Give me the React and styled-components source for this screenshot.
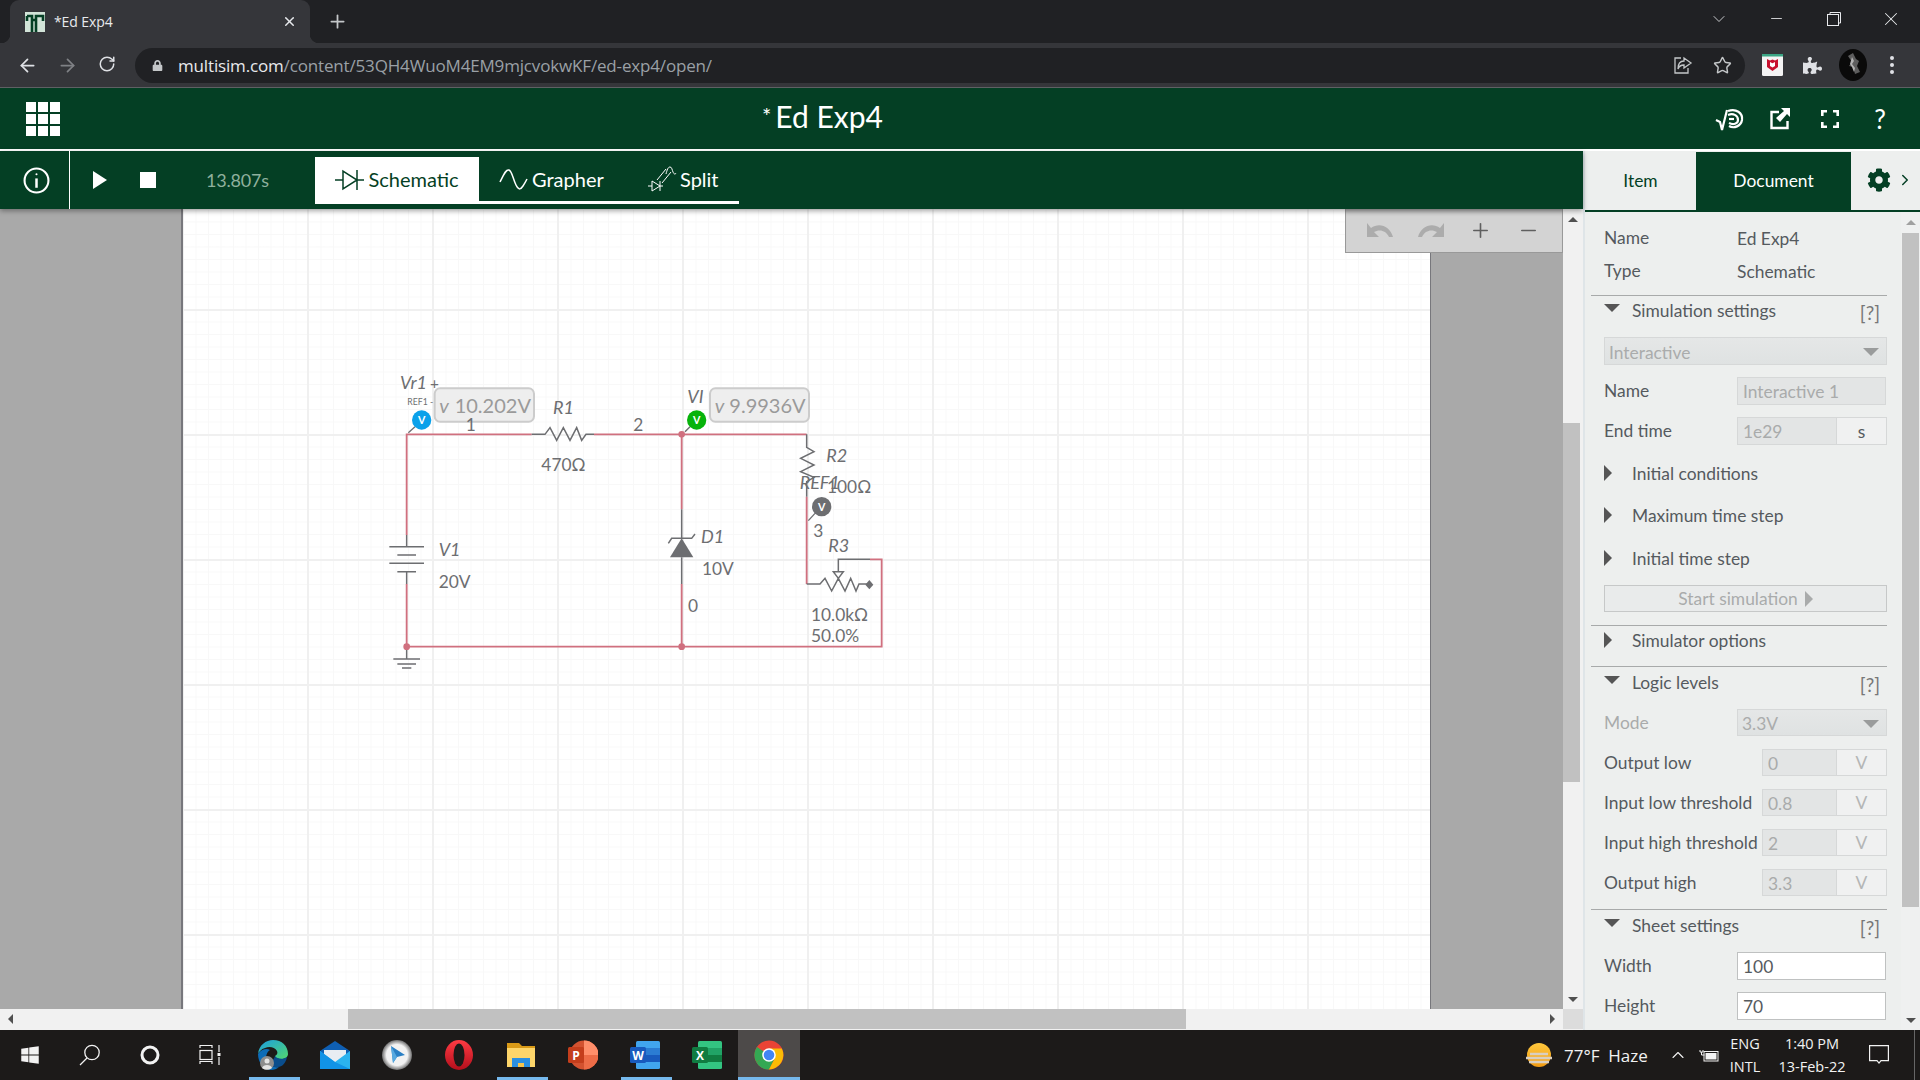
import React from "react";
import styled, {createGlobalStyle} from "styled-components";
import {ArrowLeft, ArrowRight, RotateCw, Plus, X, Minus, ChevronDown, ChevronUp, ChevronRight, Star} from "lucide-react";
import {FaCog, FaPuzzlePiece, FaWindows, FaLock} from "react-icons/fa";

const GREEN = "#043f24";
const WIRE = "#d0707f";
const PART = "#6d6e71";

const GlobalStyle = createGlobalStyle`
  html, body { margin: 0; padding: 0; background: #202124; overflow: hidden; }
  * { box-sizing: border-box; }
`;

const Page = styled.div`
  width: 1920px;
  height: 1080px;
  display: flex;
  flex-direction: column;
  font-family: "Lato", sans-serif;
  overflow: hidden;
`;

/* browser chrome */
const TabStrip = styled.div`
  height: 43px;
  flex: none;
  background: #202124;
  display: flex;
  align-items: flex-end;
  padding-left: 10px;
  color: #e8eaed;
  font-family: "Open Sans", sans-serif;
`;

const BrowserTab = styled.div`
  position: relative;
  width: 300px;
  height: 43px;
  background: #35363a;
  border-radius: 9px 9px 0 0;
  display: flex;
  align-items: center;
  padding: 0 13px 0 15px;
  font-size: 14px;
  letter-spacing: -0.1px;
  &::before, &::after {
    content: "";
    position: absolute;
    bottom: 0;
    width: 9px;
    height: 9px;
  }
  &::before { left: -9px; background: radial-gradient(circle at 0 0, transparent 9px, #35363a 9.5px); }
  &::after { right: -9px; background: radial-gradient(circle at 100% 0, transparent 9px, #35363a 9.5px); }
`;

const TabTitle = styled.span`
  margin-left: 9px;
  flex: 1;
`;

const NewTab = styled.div`
  margin-left: 17px;
  align-self: center;
  display: flex;
`;

const WindowButtons = styled.div`
  margin-left: auto;
  display: flex;
  align-items: center;
  height: 100%;
  padding-bottom: 6px;
`;

const WindowButton = styled.div`
  width: 57.5px;
  display: flex;
  justify-content: center;
`;

const BrowserBar = styled.div`
  height: 45px;
  flex: none;
  background: #35363a;
  border-bottom: 1px solid #5f6064;
  display: flex;
  align-items: center;
  color: #dfe1e5;
`;

const NavButton = styled.div`
  width: 40px;
  display: flex;
  justify-content: center;
  color: ${p => (p.$dim ? "#7f8185" : "#dfe1e5")};
`;

const NavGroup = styled.div`
  display: flex;
  width: 135px;
  padding-left: 7px;
`;

const Omnibox = styled.div`
  flex: 1;
  height: 35px;
  border-radius: 18px;
  background: #202124;
  display: flex;
  align-items: center;
  padding-left: 17px;
  font-family: "Open Sans", sans-serif;
  font-size: 17px;
  letter-spacing: -0.16px;
`;

const Host = styled.span`
  margin-left: 15px;
  color: #e8eaed;
`;

const UrlPath = styled.span`
  color: #9aa0a6;
`;

const OmniIcons = styled.div`
  margin-left: auto;
  display: flex;
  gap: 20px;
  align-items: center;
  padding-right: 13px;
`;

const BarTools = styled.div`
  width: 175px;
  flex: none;
  display: flex;
  align-items: center;
  padding-left: 17px;
`;

const ToolSlot = styled.div`
  width: ${p => p.$w}px;
  flex: none;
  display: flex;
  justify-content: center;
  align-items: center;
  & > svg { flex: none; }
`;

/* multisim header */
const AppHeader = styled.div`
  height: 63px;
  flex: none;
  background: ${GREEN};
  border-bottom: 2px solid #fff;
  display: flex;
  align-items: center;
  position: relative;
  padding-left: 26px;
  color: #fff;
`;

const Waffle = styled.div`
  display: grid;
  grid-template-columns: repeat(3, 10px);
  grid-auto-rows: 10px;
  gap: 2px;
`;

const WaffleCell = styled.div`
  background: #fff;
`;

const DocTitle = styled.div`
  position: absolute;
  left: 762px;
  top: 10px;
  font-size: 30px;
  line-height: 36px;
`;

const TitleMark = styled.span`
  font-size: 22px;
  margin-right: 4px;
  vertical-align: 4px;
`;

const HeaderIcons = styled.div`
  margin-left: auto;
  display: flex;
  align-items: center;
  padding-right: 15px;
`;

const HeaderIcon = styled.div`
  width: 50px;
  display: flex;
  justify-content: center;
  font-size: 26px;
  line-height: 30px;
`;

/* work area */
const Workspace = styled.div`
  flex: 1;
  display: flex;
  min-height: 0;
`;

const MainColumn = styled.div`
  width: 1583px;
  flex: none;
  display: flex;
  flex-direction: column;
`;

const AppToolbar = styled.div`
  height: 58px;
  flex: none;
  background: ${GREEN};
  display: flex;
  align-items: center;
  color: #fff;
  position: relative;
  z-index: 2;
  box-shadow: 0 2px 5px rgba(0, 0, 0, 0.35);
`;

const InfoCell = styled.div`
  width: 70px;
  height: 100%;
  border-right: 1px solid #fff;
  display: flex;
  align-items: center;
  justify-content: center;
  padding-left: 3px;
`;

const PlayIcon = styled.div`
  margin-left: 23px;
  width: 0;
  height: 0;
  border-left: 14px solid #fff;
  border-top: 9px solid transparent;
  border-bottom: 9px solid transparent;
`;

const StopIcon = styled.div`
  margin-left: 33px;
  width: 16px;
  height: 16px;
  background: #fff;
`;

const SimTime = styled.div`
  margin-left: 50px;
  width: 109px;
  color: #8fb09d;
  font-size: 18px;
  letter-spacing: -0.2px;
`;

const ViewTabs = styled.div`
  display: flex;
  height: 47px;
  width: 424px;
  border-bottom: 3px solid #fff;
`;

const ViewTab = styled.div`
  display: flex;
  align-items: center;
  justify-content: ${p => (p.$active ? "center" : "flex-start")};
  width: ${p => p.$w}px;
  height: ${p => (p.$active ? "47px" : "44px")};
  padding-left: ${p => p.$pad || 0}px;
  padding-bottom: ${p => (p.$active ? 2 : 0)}px;
  background: ${p => (p.$active ? "#fff" : "transparent")};
  color: ${p => (p.$active ? GREEN : "#fff")};
  font-size: 20px;
`;

const Canvas = styled.div`
  flex: 1;
  display: flex;
  min-height: 0;
`;

const ViewPort = styled.div`
  position: relative;
  flex: 1;
  background: #a9a9a9;
  display: flex;
  padding-left: 181px;
  overflow: hidden;
`;

const Sheet = styled.div`
  position: relative;
  width: 1250px;
  height: 100%;
  border-left: 2px solid #77777c;
  border-right: 1px solid #77777c;
  background-color: #fff;
  background-image:
    linear-gradient(to right, #f0f0f0 2px, transparent 2px),
    linear-gradient(to bottom, #f0f0f0 2px, transparent 2px),
    linear-gradient(to right, #f8f8f8 1px, transparent 1px),
    linear-gradient(to bottom, #f8f8f8 1px, transparent 1px);
  background-size: 125px 125px, 125px 125px, 12.5px 12.5px, 12.5px 12.5px;
  background-position: 124px 0, 0 100px, 0 0, 0 0;
`;

const Circuit = styled.svg`
  position: absolute;
  left: 197px;
  top: 151px;
  width: 520px;
  height: 320px;
`;

const Note = styled.text`
  font-family: "Lato", sans-serif;
  font-size: ${p => p.$size || (p.$italic ? 54 : 52)}px;
  font-style: ${p => (p.$italic ? "italic" : "normal")};
  fill: ${p => p.$fill || PART};
  font-weight: ${p => p.$weight || 400};
`;

const ProbeBox = styled.rect`
  fill: #eeeeee;
  stroke: #cccccc;
  stroke-width: 6;
`;

const ZoomTools = styled.div`
  position: absolute;
  left: 1345px;
  top: 0;
  width: 218px;
  height: 44px;
  background: #d3d3d3;
  border: 1px solid #999;
  border-top: 0;
  display: flex;
  align-items: center;
  justify-content: space-around;
  padding: 0 10px 0 8px;
  box-shadow: inset 0 6px 5px -4px rgba(0, 0, 0, 0.25);
`;

const VScroll = styled.div`
  width: 20px;
  flex: none;
  background: #f1f1f1;
  display: flex;
  flex-direction: column;
  align-items: center;
`;

const ThumbSpace = styled.div`
  flex: 1;
  width: 100%;
  padding-top: ${p => p.$before}px;
  display: flex;
  flex-direction: column;
`;

const VThumb = styled.div`
  height: ${p => p.$h}px;
  width: 17px;
  margin-left: ${p => p.$x || 0}px;
  background: #c1c1c1;
`;

const Caret = styled.div`
  width: 0;
  height: 0;
  flex: none;
  ${p => p.$dir === "up" && `border-left: ${p.$s}px solid transparent; border-right: ${p.$s}px solid transparent; border-bottom: ${p.$s}px solid ${p.$c};`}
  ${p => p.$dir === "down" && `border-left: ${p.$s}px solid transparent; border-right: ${p.$s}px solid transparent; border-top: ${p.$s}px solid ${p.$c};`}
  ${p => p.$dir === "right" && `border-top: ${p.$s}px solid transparent; border-bottom: ${p.$s}px solid transparent; border-left: ${p.$s}px solid ${p.$c};`}
  ${p => p.$dir === "left" && `border-top: ${p.$s}px solid transparent; border-bottom: ${p.$s}px solid transparent; border-right: ${p.$s}px solid ${p.$c};`}
`;

const ScrollEnd = styled.div`
  height: 20px;
  flex: none;
  display: flex;
  align-items: center;
  justify-content: center;
`;

const HScroll = styled.div`
  height: 21px;
  flex: none;
  background: #f1f1f1;
  border-bottom: 1px solid #f1f1f1;
  display: flex;
  align-items: center;
`;

const HTrack = styled.div`
  flex: 1;
  height: 100%;
  padding-left: 328px;
`;

const HThumb = styled.div`
  width: 838px;
  height: 20px;
  background: #c1c1c1;
`;

const ScrollCap = styled.div`
  width: 20px;
  flex: none;
  display: flex;
  justify-content: center;
`;

const Corner = styled.div`
  width: 20px;
  height: 100%;
  flex: none;
  background: #dcdcdc;
  margin-left: 1px;
`;

/* right panel */
const Panel = styled.div`
  flex: 1;
  display: flex;
  flex-direction: column;
  background: #edefee;
  border-left: 2px solid #dfe5e8;
  color: #555a5e;
  font-size: 17.4px;
`;

const PanelTabs = styled.div`
  height: 61px;
  flex: none;
  display: flex;
  padding-top: 1px;
  background: #edefee;
  border-bottom: 2px solid ${GREEN};
`;

const PanelTab = styled.div`
  width: ${p => p.$w}px;
  display: flex;
  align-items: center;
  justify-content: center;
  gap: 5px;
  padding-left: ${p => p.$pad || 0}px;
  padding-bottom: 2px;
  color: ${p => (p.$active ? "#fff" : GREEN)};
  background: ${p => (p.$active ? GREEN : "transparent")};
`;

const PanelBody = styled.div`
  flex: 1;
  display: flex;
  min-height: 0;
`;

const PanelContent = styled.div`
  width: 316px;
  flex: none;
  padding: 13px 14px 0 19px;
  overflow: hidden;
`;

const PanelScroll = styled(VScroll)`
  background: #eff0f0;
`;

const PropRow = styled.div`
  display: flex;
  align-items: center;
  height: ${p => p.$h || 28}px;
  margin-top: ${p => p.$mt || 0}px;
`;

const PropName = styled.div`
  width: ${p => p.$w || 133}px;
  flex: none;
  white-space: nowrap;
  padding-bottom: 1px;
  color: ${p => (p.$dim ? "#a9abab" : "inherit")};
`;

const Divider = styled.div`
  height: 1px;
  background: #a8aaaa;
  margin: ${p => p.$mt || 0}px 0 0 -13px;
`;

const SectionHead = styled.div`
  display: flex;
  align-items: center;
  flex: 1;
  height: 30px;
  padding-bottom: ${p => (p.$lift ? 2 : 0)}px;
`;

const CaretSlot = styled.div`
  width: 28px;
  flex: none;
  display: flex;
  align-items: center;
  padding-bottom: ${p => (p.$open ? 5 : 0)}px;
`;

const Help = styled.div`
  margin-left: auto;
  margin-right: 7px;
  margin-top: 5px;
  font-size: 19px;
  color: #777;
`;

const Select = styled.div`
  flex: 1;
  display: flex;
  align-items: center;
  padding: 2px 7px 0 4px;
  background: linear-gradient(#e5e7e7, #dfe2e2);
  border: 1px solid #d6d8d8;
  color: #aaacac;
  justify-content: space-between;
  margin-top: ${p => p.$mt || 0}px;
  height: ${p => p.$h || 28}px;
`;

const Field = styled.div`
  display: flex;
  align-items: center;
  height: 100%;
  width: ${p => p.$w}px;
  padding: 1px 0 0 5px;
  border: 1px solid ${p => (p.$on ? "#bfc1c1" : "#d6d8d8")};
  background: ${p => (p.$on ? "#fff" : "#e3e5e5")};
  color: ${p => (p.$on ? "#555a5e" : "#a9abab")};
`;

const Unit = styled.div`
  width: 50px;
  height: 100%;
  display: flex;
  align-items: center;
  justify-content: center;
  border: 1px solid #d6d8d8;
  border-left: 0;
  background: #f0f1f1;
  color: ${p => (p.$dim ? "#b4b6b6" : "#555a5e")};
`;

const StartButton = styled.div`
  margin-top: 12px;
  height: 27px;
  display: flex;
  align-items: center;
  justify-content: center;
  gap: 7px;
  border: 1px solid #c6c8c8;
  background: #e9ebeb;
  color: #a9abab;
`;

/* windows taskbar */
const Taskbar = styled.div`
  height: 50px;
  flex: none;
  background: #1c1a19;
  display: flex;
  align-items: center;
  color: #f2f2f2;
  font-family: "Open Sans", sans-serif;
`;

const SysSlot = styled.div`
  width: 60px;
  flex: none;
  display: flex;
  justify-content: center;
`;

const AppSlots = styled.div`
  display: flex;
  margin-left: 2px;
  height: 100%;
`;

const AppSlot = styled.div`
  width: 62px;
  height: 100%;
  position: relative;
  display: flex;
  align-items: center;
  justify-content: center;
  background: ${p => (p.$active ? "#4d4a49" : "transparent")};
  ${p => p.$open && `&::after {
    content: "";
    position: absolute;
    bottom: 0;
    left: ${p.$active ? 0 : 7}px;
    right: ${p.$active ? 0 : 4}px;
    height: 3px;
    background: #76b9ed;
  }`}
`;

const Tray = styled.div`
  margin-left: auto;
  display: flex;
  align-items: center;
  height: 100%;
  padding-right: 5px;
  font-size: 14.5px;
`;

const Weather = styled.div`
  font-size: 17px;
  margin-left: 10px;
  width: 94px;
  white-space: pre;
`;

const TrayStack = styled.div`
  display: flex;
  flex-direction: column;
  align-items: center;
  gap: 3px;
  line-height: 20px;
  width: ${p => p.$w}px;
  margin-left: ${p => p.$ml || 0}px;
`;

const TrayIcon = styled.div`
  display: flex;
  margin-left: ${p => p.$ml || 0}px;
`;

const DeskEdge = styled.div`
  width: 1px;
  height: 100%;
  background: #666;
  margin-left: 25px;
`;

/* drawings */
const Favicon = () => (
  <svg width="20" height="20" viewBox="0 0 20 20">
    <rect width="20" height="20" fill="#d2e4d8" />
    <path d="M2 4h5v16M2 4v5M7 8h4v12M11 14V4h7v5" stroke="#043f24" strokeWidth="2.6" fill="none" />
  </svg>
);

const ShareIcon = () => (
  <svg width="20" height="20" viewBox="0 0 20 20" fill="none" stroke="#c4c7c9" strokeWidth="1.3">
    <path d="M8 3H2v15h13v-5" />
    <path d="M11 3l7 5-7 5v-3c-3 0-5 1-6 4 0-5 2-8 6-8z" />
  </svg>
);

const McAfee = () => (
  <svg width="21" height="22" viewBox="0 0 21 22">
    <rect width="21" height="22" rx="1.5" fill="#f4f4f4" />
    <rect width="21" height="2.5" fill="#3ba584" />
    <path d="M5 5l3 1.6 2.5-1 2.5 1L16 5v8l-5.5 4L5 13z" fill="#c8102e" />
    <path d="M8 8v4l2.5 1.6L13 12V8l-2.5 1.2z" fill="#fff" />
  </svg>
);

const Avatar = () => (
  <svg width="28" height="32" viewBox="0 0 28 32">
    <ellipse cx="14" cy="16" rx="14" ry="16" fill="#0a0a0a" />
    <path d="M9 7l5-3 3 6 3 2-2 5 3 6-5 2-2-7-4-1 3-4z" fill="#5d5d5d" />
    <path d="M13 8l2 4-2 3 3 4-1 4-2-5-2-3z" fill="#b2b2b2" />
  </svg>
);

const RootSpiral = () => (
  <svg width="30" height="26" viewBox="0 0 30 26" fill="none" stroke="#fff" strokeWidth="2.2">
    <path d="M1 14l4 2 2 8 5-20" />
    <path d="M13 5c8-3 15 2 14 9-1 6-8 9-13 6" />
    <path d="M13 9c5-2 10 0 10 5 0 4-5 5-9 3" />
    <path d="M14 13h5" />
  </svg>
);

const PopOut = () => (
  <svg width="20" height="22" viewBox="0 0 20 22" fill="none">
    <path d="M9 4H1.5v16h16v-7" stroke="#fff" strokeWidth="2.4" />
    <path d="M20 0v9l-3-3-7 8-4-4 8-7-3-3z" fill="#fff" />
  </svg>
);

const FullScreen = () => (
  <svg width="18" height="18" viewBox="0 0 18 18" fill="none" stroke="#fff" strokeWidth="2.6">
    <path d="M1.3 6V1.3H6M12 1.3h4.7V6M16.7 12v4.7H12M6 16.7H1.3V12" />
  </svg>
);

const InfoRing = () => (
  <svg width="27" height="27" viewBox="0 0 26 26" fill="none" stroke="#fff" strokeWidth="2">
    <circle cx="13" cy="13" r="11.5" />
    <path d="M13 11v9" strokeWidth="2.4" />
    <circle cx="13" cy="7" r="1" fill="#fff" stroke="none" />
  </svg>
);

const DiodeTab = () => (
  <svg width="30" height="24" viewBox="0 0 30 24" fill="none" stroke={GREEN} strokeWidth="1.5" style={{marginRight: 3, marginTop: 2}}>
    <path d="M0 12h8M22 12h7M8 3v18l14-9zM22 2v20" />
  </svg>
);

const WaveTab = () => (
  <svg width="30" height="24" viewBox="0 0 30 24" fill="none" stroke="#fff" strokeWidth="1.5" style={{marginRight: 3}}>
    <path d="M1 15C5 7 7 2 10 3c3 1 4 9 7 15s5 4 7 1 3-5 4-7" />
  </svg>
);

const SplitTab = () => (
  <svg width="30" height="28" viewBox="0 0 30 28" fill="none" stroke="#fff" strokeWidth="1" style={{marginRight: 3}}>
    <path d="M1 21h4M13 21h3M5 16v10l8-5zM13 16v10" />
    <path d="M10 15l9-11M15 18l9-11" />
    <path d="M19 9c1-4 2-7 4-7s2 3 3 5 2 3 3 1" />
  </svg>
);

const UndoIcon = ({flip}) => (
  <svg width="26" height="15" viewBox="0 0 26 15" fill="#acacac" style={flip ? {transform: "scaleX(-1)"} : undefined}>
    <path d="M0 0v14h12l-5-5c5-3 12-2 15 5h4C23 3 12-1 4 5z" />
  </svg>
);

const SearchIcon = () => (
  <svg width="22" height="22" viewBox="0 0 22 22" fill="none" stroke="#f2f2f2" strokeWidth="1.3">
    <circle cx="13" cy="8.5" r="7.2" />
    <path d="M8 14L1 21" />
  </svg>
);

const CortanaRing = () => (
  <svg width="20" height="20" viewBox="0 0 20 20" fill="none" stroke="#f2f2f2" strokeWidth="3">
    <circle cx="10" cy="10" r="8" />
  </svg>
);

const TaskView = () => (
  <svg width="22" height="20" viewBox="0 0 22 20" fill="none" stroke="#f2f2f2" strokeWidth="1.2">
    <path d="M1 3V0.5h12V3M1 19v-2.5h12V19" />
    <rect x="1" y="5.5" width="12" height="9" />
    <path d="M20 0v7M20 12v8" />
    <rect x="18.5" y="8" width="3" height="3" fill="#f2f2f2" stroke="none" />
  </svg>
);

const EdgeIcon = () => (
  <svg width="32" height="32" viewBox="0 0 32 32">
    <defs>
      <linearGradient id="edgeA" x1="0" y1="0" x2="1" y2="1">
        <stop offset="0" stopColor="#1b9de2" />
        <stop offset="1" stopColor="#52d86f" />
      </linearGradient>
    </defs>
    <path d="M1 15C2 6 9 1 16 1c9 0 15 6 15 14 0 3-3 5-7 5-3 0-6-1-6-3 2-1 3-3 2-5-2-4-8-5-12-3-4 1-6 4-7 6z" fill="url(#edgeA)" />
    <path d="M1 15c3-5 9-6 12-4-3 2-5 6-3 11 1 4 6 7 12 6-2 2-5 3-8 3C7 31 1 24 1 15z" fill="#0c6cb8" />
    <path d="M18 17c2 3 8 4 12 1-1 6-5 10-9 10-5 1-9-2-11-6 2 1 6 1 8-5z" fill="#0a4d8c" />
    <circle cx="10" cy="24" r="7" fill="#8d8d8d" />
    <circle cx="10" cy="22" r="2.5" fill="#e4e4e4" />
    <path d="M5 29c1-4 9-4 10 0-3 2-7 2-10 0z" fill="#e4e4e4" />
  </svg>
);

const MailIcon = () => (
  <svg width="30" height="28" viewBox="0 0 30 28">
    <path d="M0 10L15 0l15 10v18H0z" fill="#0f5fb3" />
    <path d="M4 9h22v8l-11 6-11-6z" fill="#e8edf2" />
    <path d="M0 10l15 11 15-11v18H0z" fill="#2bb3ef" />
    <path d="M0 28V10l15 11 15 7z" fill="#1193e6" />
  </svg>
);

const BingIcon = () => (
  <svg width="30" height="30" viewBox="0 0 30 30">
    <defs>
      <radialGradient id="bingA">
        <stop offset="0.7" stopColor="#f2f2f2" />
        <stop offset="1" stopColor="#6f6f6f" />
      </radialGradient>
    </defs>
    <circle cx="15" cy="15" r="15" fill="url(#bingA)" />
    <path d="M9 6l14 9-8 2-4 6z" fill="#2a7fc4" />
    <path d="M9 6l6 11-4 6z" fill="#57a9e0" />
  </svg>
);

const OperaIcon = () => (
  <svg width="30" height="30" viewBox="0 0 30 30">
    <defs>
      <linearGradient id="opA" x1="0" y1="0" x2="0" y2="1">
        <stop offset="0" stopColor="#ff3b43" />
        <stop offset="1" stopColor="#b30f1c" />
      </linearGradient>
    </defs>
    <ellipse cx="15" cy="15" rx="14" ry="15" fill="url(#opA)" />
    <ellipse cx="15" cy="15" rx="5.5" ry="11.5" fill="#1c1a19" />
  </svg>
);

const FolderIcon = () => (
  <svg width="28" height="28" viewBox="0 0 28 28">
    <path d="M0 2h12l3 3h13v21H0z" fill="#d99a17" />
    <path d="M0 7h28v19H0z" fill="#fdd56a" />
    <path d="M5 26v-9h18v9h-6v-4h-6v4z" fill="#2a8fe0" />
    <rect x="11" y="22" width="6" height="4" fill="#f4c44e" />
  </svg>
);

const OfficeIcon = ({letter, tile, back, kind}) => (
  <svg width="30" height="30" viewBox="0 0 30 30">
    {kind === "ppt" ? (
      <>
        <circle cx="16" cy="15" r="14.5" fill={back[0]} />
        <path d="M16 .5A14.5 14.5 0 0 1 30.5 15H16z" fill={back[1]} />
        <path d="M16 15h14.5A14.5 14.5 0 0 1 16 29.5z" fill={back[2]} />
      </>
    ) : (
      <>
        <rect x="6" y="1" width="24" height="28" rx="1.5" fill={back[0]} />
        <rect x="6" y="8" width="24" height="7" fill={back[1]} />
        <rect x="6" y="15" width="24" height="7" fill={back[2]} />
      </>
    )}
    <rect x="0" y="7" width="16" height="16" rx="1.5" fill={tile} />
    <text x="8" y="19.5" textAnchor="middle" fill="#fff" fontSize="12" fontWeight="700" fontFamily="Open Sans, sans-serif">{letter}</text>
  </svg>
);

const ChromeIcon = () => (
  <svg width="30" height="30" viewBox="0 0 30 30">
    <circle cx="15" cy="15" r="14.5" fill="#ea4335" />
    <path d="M15 15L2.4 22.2A14.5 14.5 0 0 1 3 7z" fill="#34a853" />
    <path d="M15 15l7 1-7 13.5A14.5 14.5 0 0 1 2.4 22.2z" fill="#34a853" />
    <path d="M15 8.5h12.8A14.5 14.5 0 0 1 15 29.5L21 18z" fill="#fbbc05" />
    <circle cx="15" cy="15" r="6.8" fill="#fff" />
    <circle cx="15" cy="15" r="5.3" fill="#4285f4" />
  </svg>
);

const WeatherIcon = () => (
  <svg width="30" height="26" viewBox="0 0 30 26">
    <defs>
      <linearGradient id="sunA" x1="0" y1="0" x2="0" y2="1">
        <stop offset="0" stopColor="#ffc83d" />
        <stop offset="1" stopColor="#f09a12" />
      </linearGradient>
    </defs>
    <circle cx="15" cy="13" r="12" fill="url(#sunA)" />
    <path d="M2 16h26M6 12h18M5 20h20" stroke="#d9cfc0" strokeWidth="2.4" />
  </svg>
);

const BatteryIcon = () => (
  <svg width="20" height="13" viewBox="0 0 20 13" fill="none" stroke="#f2f2f2">
    <rect x="5" y="2.5" width="14" height="9.5" />
    <rect x="6.5" y="4" width="11" height="6.5" fill="#f2f2f2" stroke="none" />
    <path d="M1 1v2h3V1M2.5 3v3h3" strokeWidth="1" />
  </svg>
);

const NoticeIcon = () => (
  <svg width="20" height="20" viewBox="0 0 20 20" fill="none" stroke="#f2f2f2" strokeWidth="1.2">
    <path d="M.6.6h18.8v15H12l-2 2.5-2-2.5H.6z" />
  </svg>
);

const Wire = ({d}) => <path d={d} stroke={WIRE} strokeWidth="5.5" fill="none" />;
const Part = ({d}) => <path d={d} stroke={PART} strokeWidth="4.5" fill="none" />;

const Probe = ({x, y, fill, tail}) => (
  <g>
    <path d={tail} stroke={PART} strokeWidth="4" fill="none" />
    <circle cx={x} cy={y} r="29" fill={fill} />
    <Note x={x} y={y + 12} textAnchor="middle" $size={32} $weight={700} $fill="#fff">V</Note>
  </g>
);

const Schematic = () => (
  <Circuit viewBox="0 0 1560 960">
    <Wire d="M80 672V860H1505V598H1470M80 525V223H455M642 223H1280M905 223V448M905 672V860M1280 410V672" />
    <Part d="M80 525V560M28 560H132M52 585H108M28 610H132M52 635H108M80 635V672" />
    <Part d="M80 860V897M40 897H120M52 912H108M66 924H94" />
    <Part d="M455 223H495L510 203L530 241L550 203L570 241L590 203L605 241L618 223H642" />
    <Part d="M1280 223V262L1302 275L1262 295L1302 315L1262 335L1302 352L1280 365V410" />
    <Part d="M1280 672H1320L1335 655L1355 693L1375 655L1395 693L1412 655L1428 693L1437 672H1465" />
    <Part d="M1375 635V598H1470M1360 635H1390L1375 655Z" />
    <path d="M1468 660L1480 674L1468 688L1456 674Z" fill={PART} />
    <Part d="M905 448V535M905 592V672M865 550L875 535H935L945 522" />
    <path d="M905 535L940 592H870Z" fill={PART} />
    <circle cx="905" cy="223" r="10" fill={WIRE} />
    <circle cx="80" cy="860" r="10" fill={WIRE} />
    <circle cx="905" cy="860" r="10" fill={WIRE} />
    <Probe x={125} y={180} fill="#0ba1ea" tail="M105 200L85 218" />
    <Probe x={950} y={180} fill="#07b30b" tail="M930 200L915 215" />
    <Probe x={1325} y={440} fill={PART} tail="M1305 460L1285 482" />
    <ProbeBox x="164" y="85" width="298" height="100" rx="16" />
    <ProbeBox x="990" y="85" width="297" height="100" rx="16" />
    <Note x="178" y="158" $fill="#9a9a9a" $size={60} $italic>v</Note>
    <Note x="224" y="158" $fill="#9a9a9a" $size={60}>10.202V</Note>
    <Note x="1004" y="158" $fill="#9a9a9a" $size={60} $italic>v</Note>
    <Note x="1048" y="158" $fill="#9a9a9a" $size={60}>9.9936V</Note>
    <Note x="60" y="86" $italic>Vr1</Note>
    <Note x="150" y="86" $size={46}>+</Note>
    <Note x="82" y="134" $size={26}>REF1 -</Note>
    <Note x="257" y="212">1</Note>
    <Note x="760" y="212">2</Note>
    <Note x="519" y="162" $italic>R1</Note>
    <Note x="484" y="332">470Ω</Note>
    <Note x="922" y="128" $italic>VI</Note>
    <Note x="1339" y="305" $italic>R2</Note>
    <Note x="1259" y="388" $italic>REF1</Note>
    <Note x="1341" y="400">100Ω</Note>
    <Note x="1300" y="530">3</Note>
    <Note x="1345" y="575" $italic>R3</Note>
    <Note x="963" y="550" $italic>D1</Note>
    <Note x="966" y="645">10V</Note>
    <Note x="176" y="587" $italic>V1</Note>
    <Note x="176" y="684">20V</Note>
    <Note x="924" y="755">0</Note>
    <Note x="1293" y="782">10.0kΩ</Note>
    <Note x="1293" y="846">50.0%</Note>
  </Circuit>
);

const Section = ({label, open, help, lift}) => (
  <SectionHead $lift={lift}>
    <CaretSlot $open={open}>
      {open ? <Caret $dir="down" $s={8} $c="#555" /> : <Caret $dir="right" $s={8} $c="#555" />}
    </CaretSlot>
    {label}
    {help && <Help>[?]</Help>}
  </SectionHead>
);

const LOGIC = [
  ["Output low", "0"],
  ["Input low threshold", "0.8"],
  ["Input high threshold", "2"],
  ["Output high", "3.3"],
];

const TASK_APPS = [
  {key: "edge", node: <EdgeIcon />, open: true},
  {key: "mail", node: <MailIcon />},
  {key: "bing", node: <BingIcon />},
  {key: "opera", node: <OperaIcon />},
  {key: "files", node: <FolderIcon />, open: true},
  {key: "ppt", node: <OfficeIcon letter="P" kind="ppt" tile="#c43e1c" back={["#d35230", "#ff8f6b", "#ed6c47"]} />},
  {key: "word", node: <OfficeIcon letter="W" tile="#185abd" back={["#41a5ee", "#2b7cd3", "#185abd"]} />, open: true},
  {key: "excel", node: <OfficeIcon letter="X" tile="#107c41" back={["#33c481", "#21a366", "#107c41"]} />},
  {key: "chrome", node: <ChromeIcon />, open: true, active: true},
];

const App = () => (
  <Page>
    <GlobalStyle />
    <TabStrip>
      <BrowserTab>
        <Favicon />
        <TabTitle>*Ed Exp4</TabTitle>
        <X size={15} strokeWidth={2.4} />
      </BrowserTab>
      <NewTab><Plus size={21} strokeWidth={2} color="#c4c7c9" /></NewTab>
      <WindowButtons>
        <WindowButton><ChevronDown size={20} strokeWidth={1} /></WindowButton>
        <WindowButton><Minus size={17} strokeWidth={1.2} /></WindowButton>
        <WindowButton>
          <svg width="14" height="14" viewBox="0 0 14 14" fill="none" stroke="#e8eaed" strokeWidth="1"><rect x=".5" y="2.5" width="11" height="11" /><path d="M3 2.5V.5h10.5V11h-2" /></svg>
        </WindowButton>
        <WindowButton><X size={22} strokeWidth={1.1} /></WindowButton>
      </WindowButtons>
    </TabStrip>

    <BrowserBar>
      <NavGroup>
        <NavButton><ArrowLeft size={21} /></NavButton>
        <NavButton $dim><ArrowRight size={21} /></NavButton>
        <NavButton><RotateCw size={18} /></NavButton>
      </NavGroup>
      <Omnibox>
        <FaLock size={11} color="#c4c7c9" />
        <Host>multisim.com<UrlPath>/content/53QH4WuoM4EM9mjcvokwKF/ed-exp4/open/</UrlPath></Host>
        <OmniIcons>
          <ShareIcon />
          <Star size={19} color="#c4c7c9" strokeWidth={1.8} />
        </OmniIcons>
      </Omnibox>
      <BarTools>
        <ToolSlot $w={21}><McAfee /></ToolSlot>
        <ToolSlot $w={59}><FaPuzzlePiece size={19} color="#dfe1e5" /></ToolSlot>
        <ToolSlot $w={22}><Avatar /></ToolSlot>
        <ToolSlot $w={55}>
          <svg width="4" height="18" viewBox="0 0 4 18" fill="#dfe1e5"><circle cx="2" cy="2" r="2" /><circle cx="2" cy="9" r="2" /><circle cx="2" cy="16" r="2" /></svg>
        </ToolSlot>
      </BarTools>
    </BrowserBar>

    <AppHeader>
      <Waffle>
        {Array.from({length: 9}, (_, i) => <WaffleCell key={i} />)}
      </Waffle>
      <DocTitle><TitleMark>*</TitleMark>Ed Exp4</DocTitle>
      <HeaderIcons>
        <HeaderIcon><RootSpiral /></HeaderIcon>
        <HeaderIcon><PopOut /></HeaderIcon>
        <HeaderIcon><FullScreen /></HeaderIcon>
        <HeaderIcon>?</HeaderIcon>
      </HeaderIcons>
    </AppHeader>

    <Workspace>
      <MainColumn>
        <AppToolbar>
          <InfoCell><InfoRing /></InfoCell>
          <PlayIcon />
          <StopIcon />
          <SimTime>13.807s</SimTime>
          <ViewTabs>
            <ViewTab $active $w={164}><DiodeTab />Schematic</ViewTab>
            <ViewTab $w={168} $pad={20}><WaveTab />Grapher</ViewTab>
            <ViewTab $w={92}><SplitTab />Split</ViewTab>
          </ViewTabs>
        </AppToolbar>
        <Canvas>
          <ViewPort>
            <Sheet><Schematic /></Sheet>
            <ZoomTools>
              <UndoIcon />
              <UndoIcon flip />
              <Plus size={23} strokeWidth={1.7} color="#5f5f5f" />
              <Minus size={23} strokeWidth={1.7} color="#5f5f5f" />
            </ZoomTools>
          </ViewPort>
          <VScroll>
            <ScrollEnd><Caret $dir="up" $s={5} $c="#505050" /></ScrollEnd>
            <ThumbSpace $before={194}><VThumb $h={359} /></ThumbSpace>
            <ScrollEnd><Caret $dir="down" $s={5} $c="#505050" /></ScrollEnd>
          </VScroll>
        </Canvas>
        <HScroll>
          <ScrollCap><Caret $dir="left" $s={5} $c="#505050" /></ScrollCap>
          <HTrack><HThumb /></HTrack>
          <ScrollCap><Caret $dir="right" $s={5} $c="#505050" /></ScrollCap>
          <Corner />
        </HScroll>
      </MainColumn>

      <Panel>
        <PanelTabs>
          <PanelTab $w={111}>Item</PanelTab>
          <PanelTab $w={155} $active>Document</PanelTab>
          <PanelTab $w={68} $pad={11}><FaCog size={24} color={GREEN} /><ChevronRight size={18} color={GREEN} /></PanelTab>
        </PanelTabs>
        <PanelBody>
          <PanelContent>
            <PropRow $h={26}><PropName>Name</PropName>Ed Exp4</PropRow>
            <PropRow $h={26} $mt={7}><PropName>Type</PropName>Schematic</PropRow>
            <Divider $mt={11} />
            <Section label="Simulation settings" open help lift />
            <Select $mt={11}>Interactive<Caret $dir="down" $s={8} $c="#9a9c9c" /></Select>
            <PropRow $mt={12}><PropName>Name</PropName><Field $w={149}>Interactive 1</Field></PropRow>
            <PropRow $mt={12}><PropName>End time</PropName><Field $w={100}>1e29</Field><Unit>s</Unit></PropRow>
            <PropRow $mt={15}><Section label="Initial conditions" lift /></PropRow>
            <PropRow $mt={14}><Section label="Maximum time step" lift /></PropRow>
            <PropRow $mt={15}><Section label="Initial time step" lift /></PropRow>
            <StartButton>Start simulation<Caret $dir="right" $s={8} $c="#a9abab" /></StartButton>
            <Divider $mt={13} />
            <Section label="Simulator options" lift />
            <Divider $mt={10} />
            <Section label="Logic levels" open help />
            <PropRow $h={27} $mt={12}>
              <PropName $dim>Mode</PropName>
              <Select $h={27}>3.3V<Caret $dir="down" $s={8} $c="#9a9c9c" /></Select>
            </PropRow>
            {LOGIC.map(([name, value]) => (
              <PropRow key={name} $h={27} $mt={13}>
                <PropName $w={158}>{name}</PropName>
                <Field $w={75}>{value}</Field>
                <Unit $dim>V</Unit>
              </PropRow>
            ))}
            <Divider $mt={13} />
            <Section label="Sheet settings" open help />
            <PropRow $mt={12}><PropName>Width</PropName><Field $on $w={149}>100</Field></PropRow>
            <PropRow $mt={12}><PropName>Height</PropName><Field $on $w={149}>70</Field></PropRow>
          </PanelContent>
          <PanelScroll>
            <ScrollEnd><Caret $dir="up" $s={5} $c="#a0a0a0" /></ScrollEnd>
            <ThumbSpace $before={1}><VThumb $h={674} $x={1} /></ThumbSpace>
            <ScrollEnd><Caret $dir="down" $s={5} $c="#505050" /></ScrollEnd>
          </PanelScroll>
        </PanelBody>
      </Panel>
    </Workspace>

    <Taskbar>
      <SysSlot><FaWindows size={20} color="#f2f2f2" /></SysSlot>
      <SysSlot><SearchIcon /></SysSlot>
      <SysSlot><CortanaRing /></SysSlot>
      <SysSlot><TaskView /></SysSlot>
      <AppSlots>
        {TASK_APPS.map(app => (
          <AppSlot key={app.key} $open={app.open} $active={app.active}>{app.node}</AppSlot>
        ))}
      </AppSlots>
      <Tray>
        <WeatherIcon />
        <Weather>77°F  Haze</Weather>
        <TrayIcon $ml={10}><ChevronUp size={20} strokeWidth={1.3} /></TrayIcon>
        <TrayIcon $ml={11}><BatteryIcon /></TrayIcon>
        <TrayStack $w={34} $ml={9}><span>ENG</span><span>INTL</span></TrayStack>
        <TrayStack $w={80} $ml={10}><span>1:40 PM</span><span>13-Feb-22</span></TrayStack>
        <TrayIcon $ml={17}><NoticeIcon /></TrayIcon>
        <DeskEdge />
      </Tray>
    </Taskbar>
  </Page>
);

export default App;
